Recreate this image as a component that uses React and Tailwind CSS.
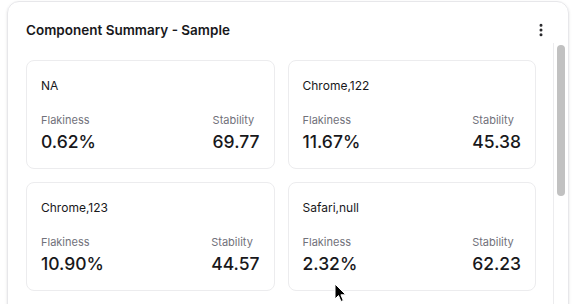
import { MoreVertical } from 'lucide-react';

const rows = [
  { name: 'NA', flakiness: '0.62%', stability: '69.77' },
  { name: 'Chrome,122', flakiness: '11.67%', stability: '45.38' },
  { name: 'Chrome,123', flakiness: '10.90%', stability: '44.57' },
  { name: 'Safari,null', flakiness: '2.32%', stability: '62.23' },
];

const Stat = ({ label, value }) => (
  <div className="flex flex-col">
    <span className="text-[11px] leading-[16px] text-[#71717a]">{label}</span>
    <span className="mt-[2px] text-[17.5px] leading-[24px] font-medium text-[#18181b]">{value}</span>
  </div>
);

const SummaryCard = ({ row }) => (
  <div className="h-[109px] rounded-lg border border-[#ececee] px-[14px] pt-[17px]">
    <div className="text-[12px] leading-[16px] text-[#18181b]">{row.name}</div>
    <div className="mt-[18px] flex items-start justify-between">
      <Stat label="Flakiness" value={row.flakiness} />
      <Stat label="Stability" value={row.stability} />
    </div>
  </div>
);

export default function App() {
  return (
    <div
      className="relative h-[304px] w-[576px] overflow-hidden bg-white"
      style={{ fontFamily: 'Inter, "Liberation Sans", sans-serif' }}
    >
      <div className="ml-[7px] mt-[1px] flex h-[330px] w-[562px] flex-col rounded-xl border border-[#e7e7ea] shadow-sm">
        {/* Header */}
        <div className="flex h-[41px] shrink-0 items-center justify-between pl-[18px] pr-[19px]">
          <h1 className="pt-[16px] text-[13.5px] font-semibold text-[#18181b]">Component Summary - Sample</h1>
          <MoreVertical className="mt-[15px] h-[16px] w-[16px] text-[#27272a]" strokeWidth={2.5} />
        </div>

        {/* Body with scroll area */}
        <div className="flex min-h-0 flex-1">
          <div className="flex-1 overflow-hidden pl-[18px] pr-[17px] pt-[17px]">
            <div className="grid grid-cols-2 gap-[13px]">
              {rows.map((row) => (
                <SummaryCard key={row.name} row={row} />
              ))}
              <div className="h-[109px] rounded-lg border border-[#ececee]" />
              <div className="h-[109px] rounded-lg border border-[#ececee]" />
            </div>
          </div>
          <div className="w-[15px] border-l border-[#ececee] pt-[2px]">
            <div className="mx-auto h-[151px] w-[8px] rounded-full bg-[#c1c1c1]" />
          </div>
        </div>
      </div>

      {/* Mouse pointer */}
      <svg className="absolute left-[334px] top-[283px]" width="13" height="20" viewBox="0 0 13 20">
        <path d="M1 1 L1 16 L4.5 12.5 L7 18.5 L9.3 17.5 L6.9 11.8 L11.8 11.8 Z" fill="#000" stroke="#fff" strokeWidth="1" />
      </svg>
    </div>
  );
}
